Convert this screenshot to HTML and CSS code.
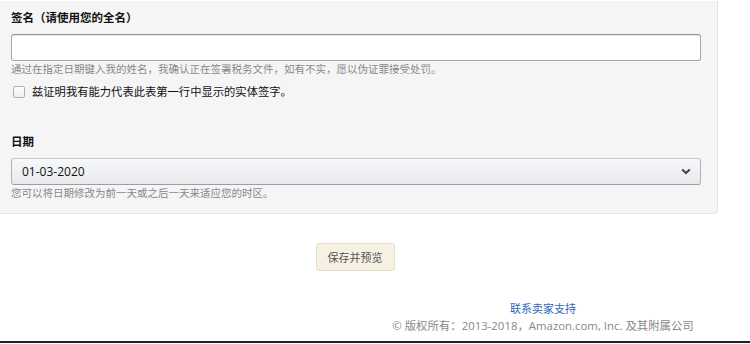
FILE: index.html
```html
<!DOCTYPE html>
<html lang="zh-CN">
<head>
    <meta charset="UTF-8">
    <meta name="viewport" content="width=device-width, initial-scale=1.0">
    <title>签名和日期</title>
    <link rel="stylesheet" href="styles.css">
</head>
<body>
    <div class="panel">
        <label class="field-label" for="signature">签名（请使用您的全名）</label>
        <input type="text" id="signature" class="text-input">
        <p class="help">通过在指定日期键入我的姓名，我确认正在签署税务文件，如有不实，愿以伪证罪接受处罚。</p>
        <label class="check-row">
            <span class="checkbox"></span>
            <span>兹证明我有能力代表此表第一行中显示的实体签字。</span>
        </label>

        <div class="field-label date-label">日期</div>
        <div class="select-box">
            <span>01-03-2020</span>
            <svg class="chevron" width="10" height="7" viewBox="0 0 10 7">
                <path d="M1.2 1.4 L5 5 L8.8 1.4" fill="none" stroke="#444" stroke-width="2"/>
            </svg>
        </div>
        <p class="help">您可以将日期修改为前一天或之后一天来适应您的时区。</p>
    </div>

    <div class="actions">
        <button class="save-btn">保存并预览</button>
    </div>

    <div class="footer">
        <a href="#" class="support-link">联系卖家支持</a>
        <span class="copyright">© 版权所有：2013-2018，Amazon.com, Inc. 及其附属公司</span>
    </div>
    <div class="bottom-bar"></div>
</body>
</html>
```

FILE: styles.css
```css
body {
    margin: 0;
    padding-top: 1px;
    background: #fff;
    font-family: 'Open Sans', 'Noto Sans CJK SC', sans-serif;
    color: #111;
}
.panel {
    width: 718px;
    padding: 9px 0 13px 11px;
    box-sizing: border-box;
    background: #f5f5f5;
    border-right: 1px solid #e3e3e3;
    border-bottom: 1px solid #e3e3e3;
    border-bottom-right-radius: 4px;
}
.field-label {
    display: block;
    font-size: 11.5px;
    font-weight: bold;
    line-height: 16px;
    color: #111;
}
.text-input {
    display: block;
    width: 690px;
    height: 27px;
    margin-top: 8px;
    box-sizing: border-box;
    border: 1px solid #a6a6a6;
    border-top-color: #949494;
    border-radius: 3px;
    background: #fff;
    box-shadow: 0 1px 0 rgba(255, 255, 255, 0.5), inset 0 1px 0 rgba(0, 0, 0, 0.07);
}
.help {
    margin: 1px 0 0;
    font-size: 10.5px;
    line-height: 14px;
    color: #888;
}
.check-row {
    display: flex;
    align-items: center;
    gap: 7px;
    margin-top: 8px;
    font-size: 11.3px;
    line-height: 16px;
    color: #111;
}
.checkbox {
    width: 10px;
    height: 10px;
    margin-left: 2px;
    border: 1px solid #adb1b8;
    border-radius: 2px;
    background: linear-gradient(#fdfdfd, #eceef1);
}
.date-label {
    margin-top: 34px;
}
.select-box {
    display: flex;
    align-items: center;
    justify-content: space-between;
    width: 690px;
    height: 27px;
    margin-top: 8px;
    padding: 0 9px 0 10px;
    box-sizing: border-box;
    border: 1px solid #adb1b8;
    border-top-color: #c5c8cd;
    border-bottom-color: #9a9ea6;
    border-radius: 3px;
    background: linear-gradient(#f7f8fa, #e7e9ec);
    font-size: 12px;
    color: #111;
}
.actions {
    width: 710px;
    margin-top: 29px;
    text-align: center;
}
.save-btn {
    width: 79px;
    height: 28px;
    padding: 0;
    border: 1px solid #e6dfcc;
    border-radius: 3px;
    background: #f7f1e3;
    font-family: 'Noto Sans CJK SC', sans-serif;
    font-size: 11px;
    color: #555;
}
.footer {
    display: flex;
    flex-direction: column;
    align-items: center;
    width: 302px;
    margin: 29px 0 0 392px;
}
.support-link {
    font-family: 'Noto Sans CJK SC', sans-serif;
    font-size: 11px;
    line-height: 16px;
    color: #2e67b8;
    text-decoration: none;
}
.copyright {
    margin-top: 2px;
    font-size: 11.4px;
    line-height: 16px;
    color: #888;
    white-space: nowrap;
}
.bottom-bar {
    margin-top: 7px;
    height: 2px;
    background: #222;
}
```
